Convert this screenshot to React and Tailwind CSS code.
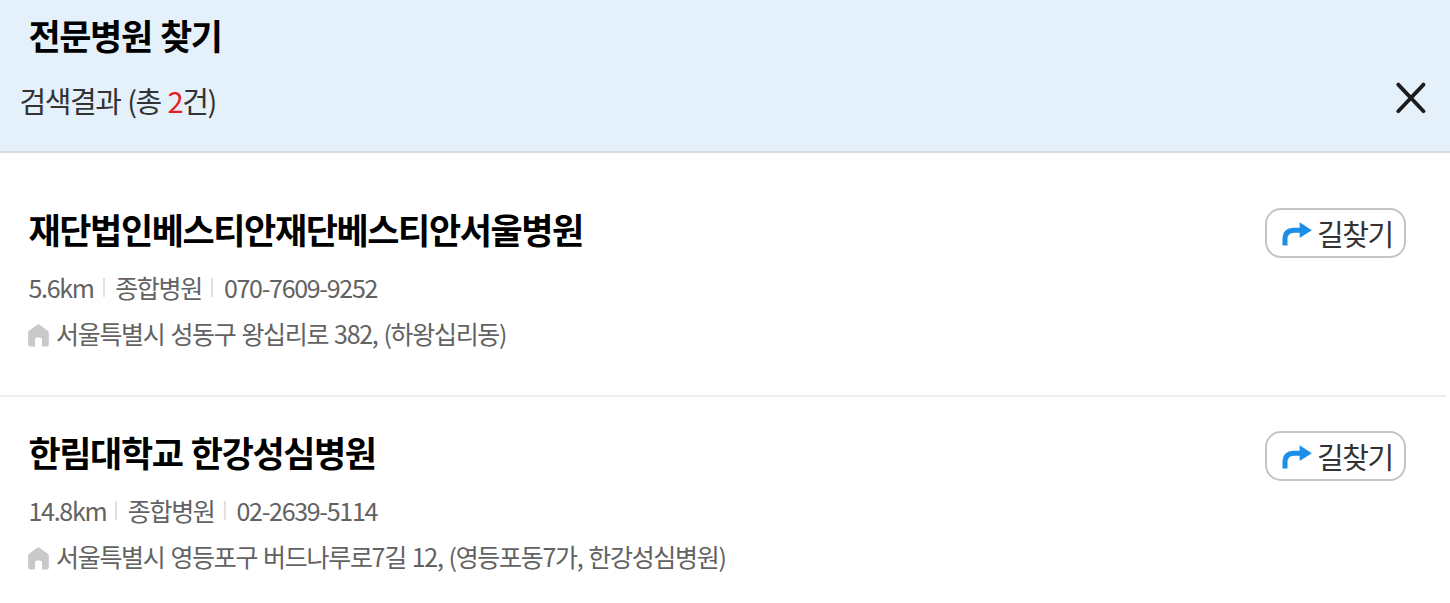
import React from "react";

const hospitals = [
    {
        name: "재단법인베스티안재단베스티안서울병원",
        distance: "5.6km",
        type: "종합병원",
        phone: "070-7609-9252",
        address: "서울특별시 성동구 왕십리로 382, (하왕십리동)",
    },
    {
        name: "한림대학교 한강성심병원",
        distance: "14.8km",
        type: "종합병원",
        phone: "02-2639-5114",
        address: "서울특별시 영등포구 버드나루로7길 12, (영등포동7가, 한강성심병원)",
    },
]

const CloseIcon = () => (
    <svg width="30" height="32" viewBox="0 0 30 32" fill="none" stroke="#1c1c1c" strokeWidth="3.8" strokeLinecap="round">
        <path d="M2.3 2.6L27.5 29.2M27.5 2.6L2.3 29.2" />
    </svg>
)

const RouteIcon = () => (
    <svg width="30" height="24" viewBox="0 0 30 24" className="mt-px shrink-0">
        <path d="M3 23.5V17.5C3 11.5 6 8.3 12 8.3H19" fill="none" stroke="#1b8fe8" strokeWidth="5" />
        <path d="M17.6 0.3L29.8 8.3L17.6 16Z" fill="#1b8fe8" />
    </svg>
)

const HomeIcon = () => (
    <svg width="21" height="23" viewBox="0 0 21 23" className="shrink-0">
        <path
            d="M9.2 0.7Q10.4 0 11.6 0.7L19.8 6.8Q20.8 7.6 20.8 8.8V20.4Q20.8 22.4 18.8 22.4H14V15.4Q14 13.4 12 13.4H9Q7 13.4 7 15.4V22.4H2.1Q0.1 22.4 0.1 20.4V8.8Q0.1 7.6 1.1 6.8Z"
            fill="#c9c9c9"
        />
    </svg>
)

const HospitalItem = ({ item }) => {
    return (
        <li className="flex justify-between pl-7 pr-10">
            <div>
                <h2 className="pl-[0.5px] text-[35px] leading-[50px] font-bold tracking-[-1.4px] [word-spacing:1.8px] text-black">{item.name}</h2>

                {/* Distance | type | phone */}
                <div className="mt-[13px] flex h-10 items-center pl-[0.5px] text-[25px] leading-10 tracking-[-1.3px] text-[#626262]">
                    <span>{item.distance}</span>
                    <span className="ml-[9px] mr-[10.5px] h-[19px] w-[2px] bg-[#e2e2e2]"></span>
                    <span>{item.type}</span>
                    <span className="ml-[9.5px] mr-[10.5px] h-[19px] w-[2px] bg-[#e2e2e2]"></span>
                    <span>{item.phone}</span>
                </div>

                {/* Address */}
                <div className="mt-[6px] flex h-10 items-center gap-[7px] text-[25px] leading-10 tracking-[-1.3px] [word-spacing:1.6px] text-[#626262]">
                    <div className="pt-[5px]">
                        <HomeIcon />
                    </div>
                    <span>{item.address}</span>
                </div>
            </div>

            {/* Directions button */}
            <button className="mr-1 mt-1 flex h-[50px] w-[141px] items-center gap-[5px] rounded-[16px] border-2 border-[#c4c4c4] bg-white pl-[15px] text-[29px] leading-[46px] tracking-[-1.45px] text-[#333]">
                <RouteIcon />
                <span>길찾기</span>
            </button>
        </li>
    )
}

const App = () => {
    return (
        <div className="h-[603px] w-full overflow-hidden bg-white font-['Noto_Sans_CJK_KR',sans-serif]">
            {/* Header */}
            <header className="flex h-[153px] items-start justify-between border-b-2 border-[#d9dce0] bg-[#e4f1fb] pr-6 pt-[10px]">
                <div>
                    <h1 className="pl-[28.5px] text-[35px] leading-[50px] font-bold tracking-[-1.4px] [word-spacing:1.8px] text-black">전문병원 찾기</h1>
                    <p className="mt-5 pl-[19.5px] text-[29px] leading-10 tracking-[-1.45px] [word-spacing:1.7px] text-[#333]">
                        검색결과 (총 <span className="text-[#e61e23]">2</span>건)
                    </p>
                </div>
                <button className="mt-[72px]" aria-label="닫기">
                    <CloseIcon />
                </button>
            </header>

            {/* Search results */}
            <ul className="pt-[51px]">
                <HospitalItem item={hospitals[0]} />
                <li className="mr-1 mt-[42px] mb-[30px] h-[2px] bg-[#eeeeee]"></li>
                <HospitalItem item={hospitals[1]} />
            </ul>
        </div>
    )
}

export default App;
